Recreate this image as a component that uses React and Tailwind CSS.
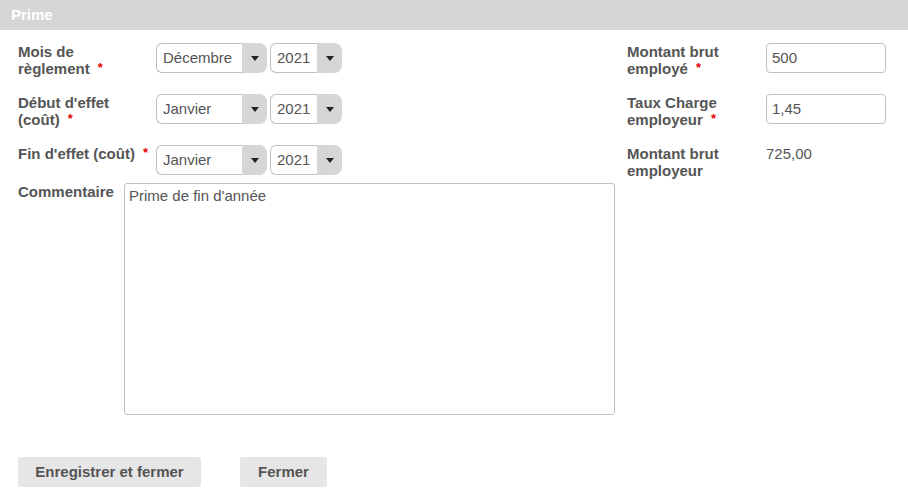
const Star = () => <span className="text-[#e60000] ml-1 text-[13px] relative -top-[2px]">*</span>;

const Select = ({ value, width }) => (
  <div className={`flex h-[30px] ${width}`}>
    <div className="flex-1 flex items-center pl-[6px] border border-[#c4c0bc] border-r-0 rounded-l-[6px] bg-white text-[15px] text-[#555]">
      {value}
    </div>
    <div className="w-[25px] bg-[#d6d6d6] rounded-r-[8px] flex items-center justify-center">
      <svg width="8" height="5" viewBox="0 0 8 5"><path d="M0 0h8L4 5z" fill="#222" /></svg>
    </div>
  </div>
);

const Label = ({ children, w = "w-[138px]" }) => (
  <div className={`${w} shrink-0 text-[15px] leading-[17px] font-bold text-[#555]`}>{children}</div>
);

export default function App() {
  return (
    <div className="w-[908px] h-[493px] bg-white font-['Liberation_Sans',Arial,sans-serif] overflow-hidden">
      <div className="h-[30px] bg-[#d6d6d6] flex items-center px-[11px] text-white font-bold text-[15px]">Prime</div>
      <div className="flex pt-[13px]">
        <div className="w-[615px] shrink-0 pl-[18px]">
          <div className="flex h-[51px]">
            <Label>Mois de<br />règlement <Star /></Label>
            <div className="flex gap-[3px]">
              <Select value="Décembre" width="w-[111px]" />
              <Select value="2021" width="w-[72px]" />
            </div>
          </div>
          <div className="flex h-[51px]">
            <Label>Début d'effet<br />(coût) <Star /></Label>
            <div className="flex gap-[3px]">
              <Select value="Janvier" width="w-[111px]" />
              <Select value="2021" width="w-[72px]" />
            </div>
          </div>
          <div className="flex h-[38px]">
            <Label>Fin d'effet (coût) <Star /></Label>
            <div className="flex gap-[3px]">
              <Select value="Janvier" width="w-[111px]" />
              <Select value="2021" width="w-[72px]" />
            </div>
          </div>
          <div className="flex">
            <Label w="w-[106px]">Commentaire</Label>
            <div className="w-[491px] h-[232px] border border-[#c4c0bc] rounded-[3px] px-[4px] pt-[2px] text-[15px] leading-[19px] text-[#555]">
              Prime de fin d'année
            </div>
          </div>
        </div>
        <div className="pl-[12px]">
          <div className="flex h-[51px]">
            <Label w="w-[139px]">Montant brut<br />employé <Star /></Label>
            <div className="w-[120px] h-[30px] border border-[#c4c0bc] rounded-[4px] flex items-center pl-[5px] text-[15px] text-[#555]">500</div>
          </div>
          <div className="flex h-[51px]">
            <Label w="w-[139px]">Taux Charge<br />employeur <Star /></Label>
            <div className="w-[120px] h-[30px] border border-[#c4c0bc] rounded-[4px] flex items-center pl-[5px] text-[15px] text-[#555]">1,45</div>
          </div>
          <div className="flex">
            <Label w="w-[139px]">Montant brut<br />employeur</Label>
            <div className="text-[15px] text-[#555] leading-[17px]">725,00</div>
          </div>
        </div>
      </div>
      <div className="flex gap-[39px] pl-[18px] pt-[42px]">
        <button className="h-[30px] w-[183px] bg-[#e6e6e6] rounded-[2px] text-[15px] font-bold text-[#555]">Enregistrer et fermer</button>
        <button className="h-[30px] w-[87px] bg-[#e6e6e6] rounded-[2px] text-[15px] font-bold text-[#555]">Fermer</button>
      </div>
    </div>
  );
}
